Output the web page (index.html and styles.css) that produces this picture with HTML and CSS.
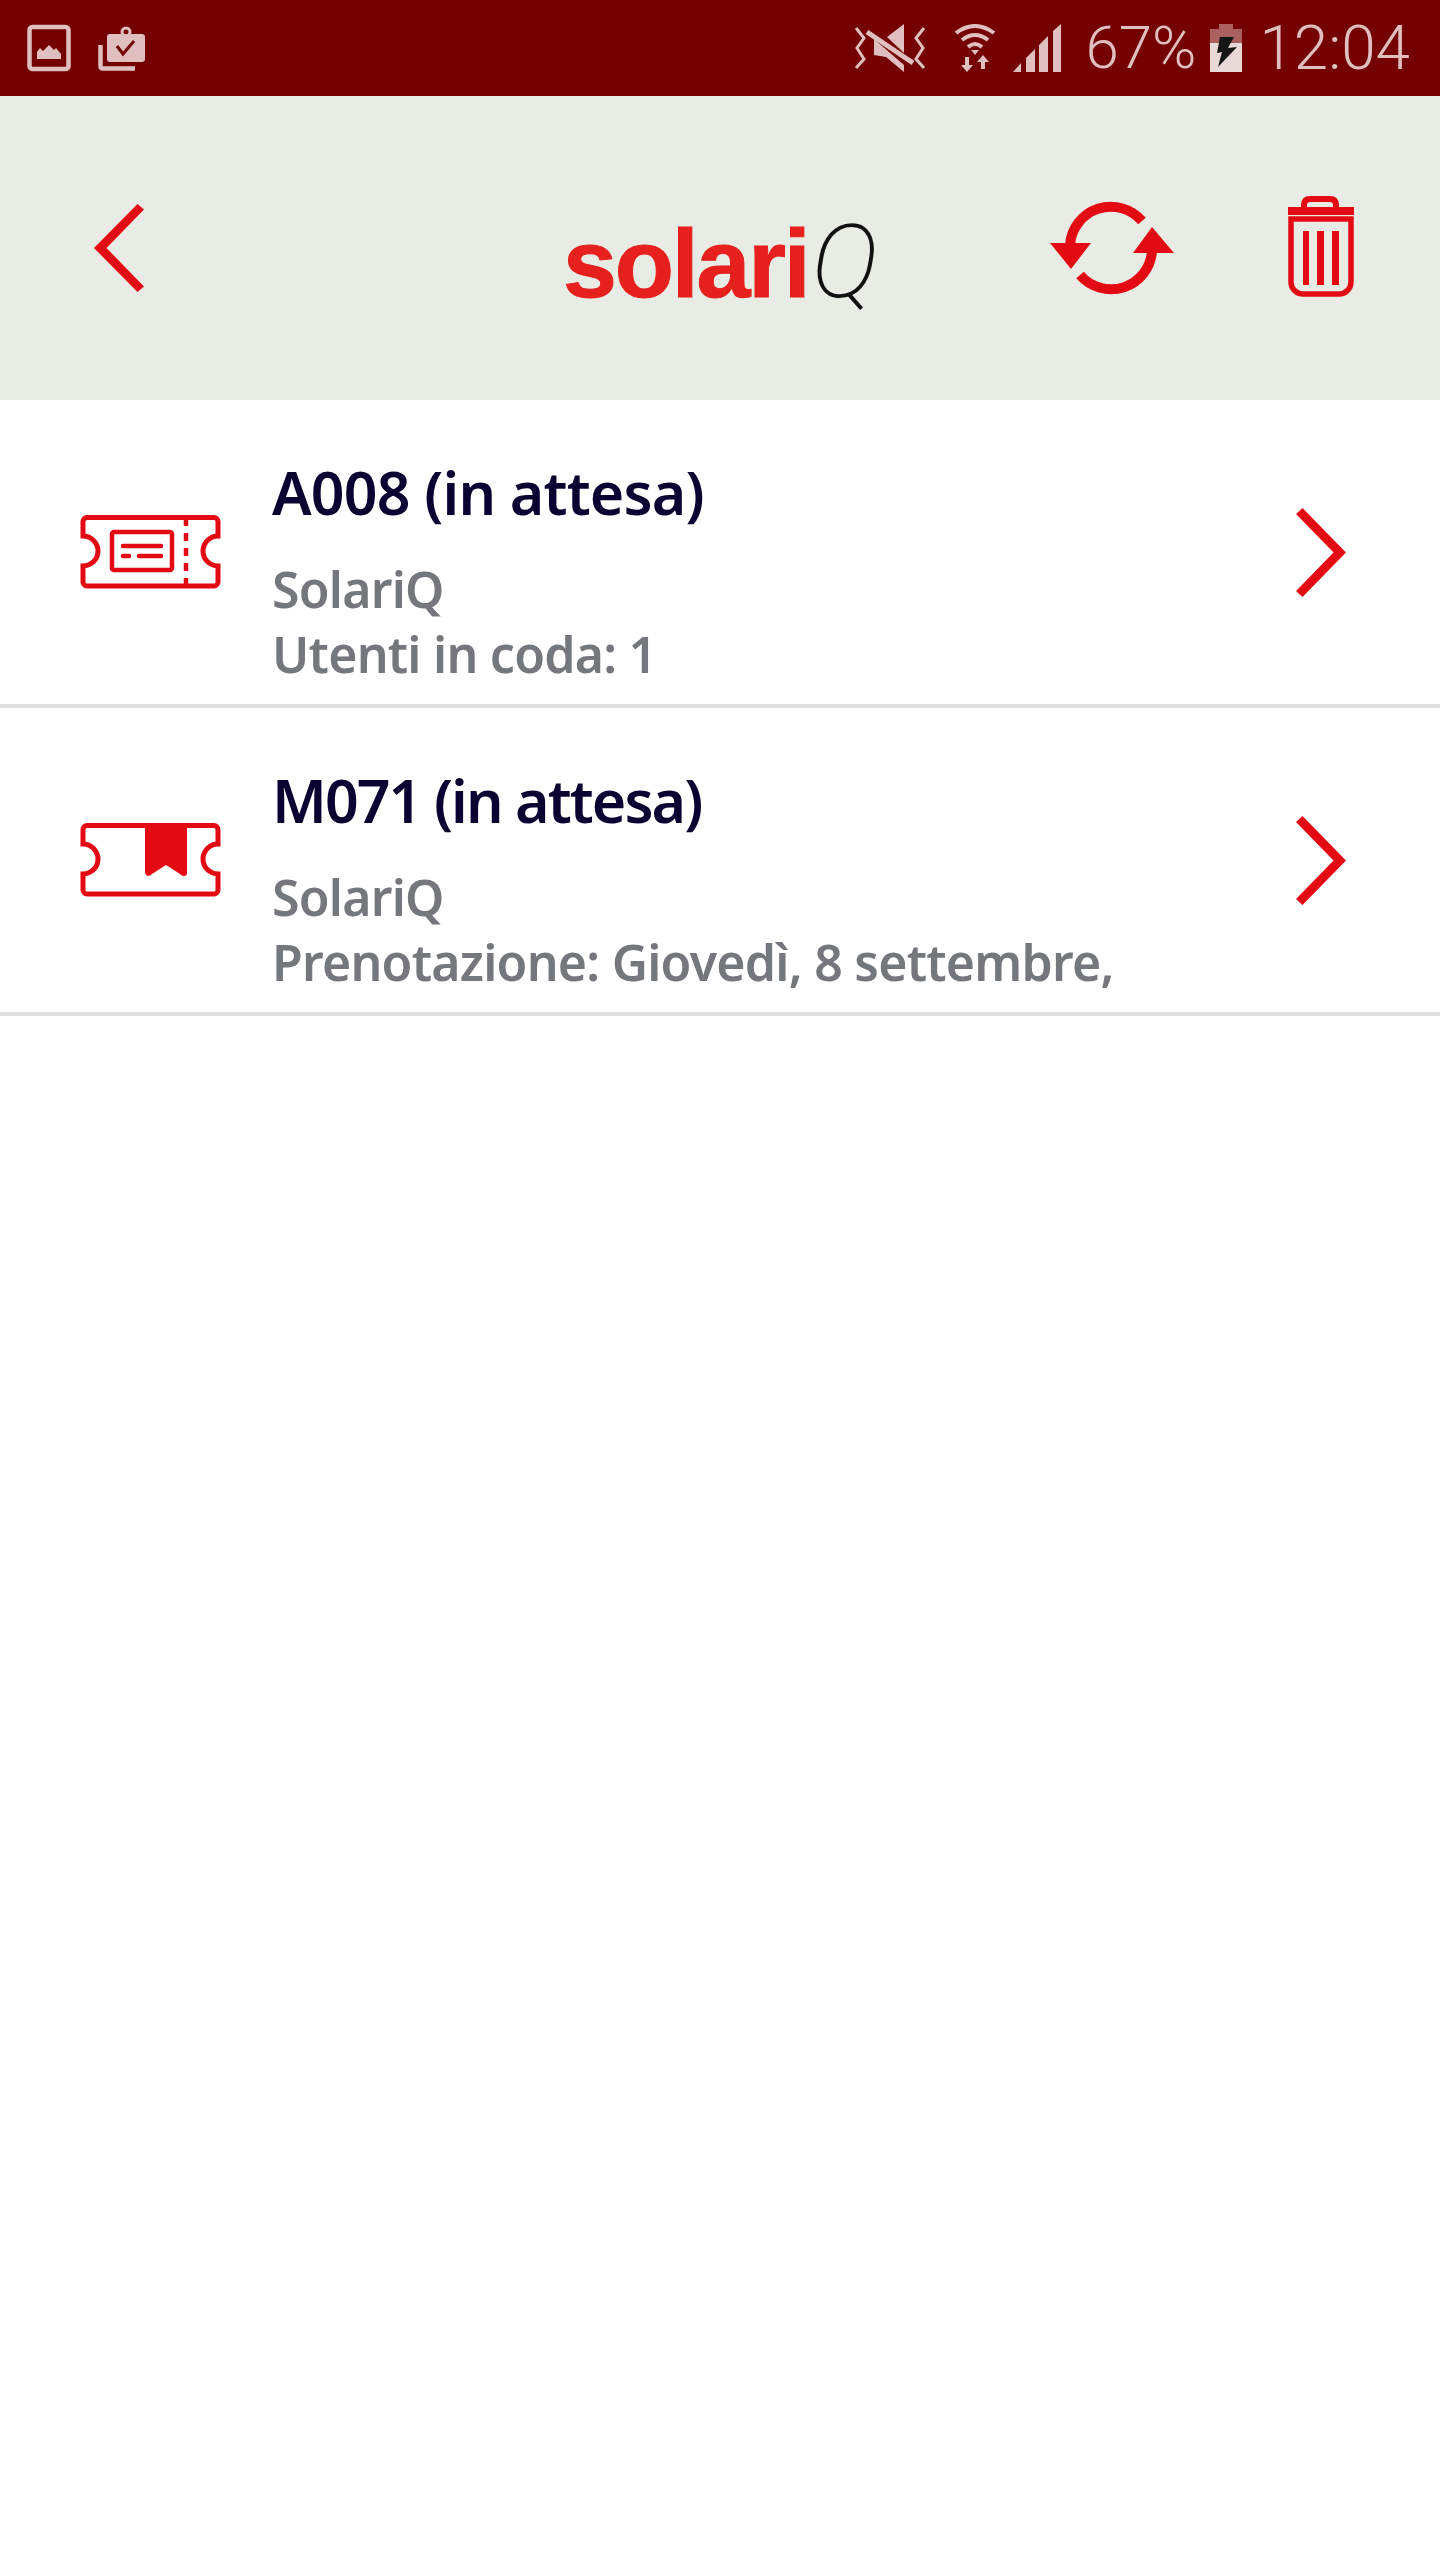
FILE: index.html
```html
<!DOCTYPE html>
<html lang="it">
<head>
    <meta charset="UTF-8">
    <meta name="viewport" content="width=device-width, initial-scale=1.0">
    <link rel="stylesheet" href="styles.css">
    <title>SolariQ</title>
</head>
<body>
    <div class="status-bar">
        <div class="status-left">
            <svg class="status-icon" width="44" height="48" viewBox="0 0 44 48">
                <rect x="2.5" y="3" width="39" height="42" rx="3" fill="none" stroke="#dfbfbf" stroke-width="4.5"/>
                <path d="M10 35V28l3-4 3 3 6-6 5 5 2-2 5 6v5z" fill="#dfbfbf"/>
            </svg>
            <svg class="status-icon" width="47" height="48" viewBox="0 0 47 48">
                <path d="M2.5 21V42q0 2.5 2.5 2.5H37" fill="none" stroke="#dfbfbf" stroke-width="4.5"/>
                <rect x="9" y="10" width="38" height="28" rx="3" fill="#dfbfbf"/>
                <circle cx="28" cy="8" r="4" fill="none" stroke="#dfbfbf" stroke-width="3"/>
                <path d="M19 22l6 8 11-13" fill="none" stroke="#750000" stroke-width="3"/>
            </svg>
        </div>
        <div class="status-right">
            <svg class="status-icon" width="72" height="48" viewBox="0 0 72 48">
                <path d="M2 4l8 10-7 10 7 11-8 9M70 4l-8 10 7 10-7 11 8 9" fill="none" stroke="#dfbfbf" stroke-width="3"/>
                <path d="M50 0L33 13 50 29zM20 15v16l12 2 18 15v-7z" fill="#dfbfbf"/>
                <path d="M13 8l46 31" stroke="#dfbfbf" stroke-width="5"/>
            </svg>
            <svg class="status-icon wifi" width="42" height="48" viewBox="0 0 42 48">
                <path d="M2 9Q21-5 40 9M8 16Q21 6 34 16M14 23Q21 17 28 23" fill="none" stroke="#dfbfbf" stroke-width="4"/>
                <path d="M17 26h8l-4 5zM11 33h4v8h4l-6 7-6-7h4zM29 31l6 7h-4v7h-4v-7h-4z" fill="#dfbfbf"/>
            </svg>
            <svg class="status-icon signal" width="50" height="48" viewBox="0 0 50 48">
                <path d="M1 48l8-9v9zM14 48V34l9-9v23zM27 48V21l9-9v36zM41 48V7l8-7v48z" fill="#dfbfbf"/>
            </svg>
            <span class="status-text percent">67%</span>
            <svg class="status-icon battery" width="32" height="48" viewBox="0 0 32 48">
                <path d="M9 0h14v5h9v14H0V5h9z" fill="#ab6060"/>
                <rect y="19" width="32" height="29" fill="#e8d8d8"/>
                <path d="M24 13H10L7 29l5-1-4 15 19-20-9 1z" fill="#151515"/>
            </svg>
            <span class="status-text clock">12:04</span>
        </div>
    </div>

    <div class="top-bar">
        <svg class="back" width="50" height="88" viewBox="0 0 50 88">
            <path d="M43.500 0l6.500 5.500L12.500 44 50 82.500 43.500 88 0 44z" fill="#e40a14"/>
        </svg>
        <div class="logo"><span class="logo-name">solari</span><span class="logo-q">Q</span></div>
        <svg class="refresh" width="124" height="94" viewBox="0 0 124 94">
            <path d="M20 44A41 41 0 0 1 92 20M102 50A41 41 0 0 1 30 74" fill="none" stroke="#e40a14" stroke-width="10"/>
            <path d="M0 42h41L21 68zM83 52h41L102 26z" fill="#e40a14"/>
        </svg>
        <svg class="trash" width="66" height="101" viewBox="0 0 66 101">
            <path d="M16 13V9q0-6 6-6h20q6 0 6 6v4" fill="none" stroke="#e40a14" stroke-width="6"/>
            <rect y="11" width="66" height="8" fill="#e40a14"/>
            <path d="M3 23V86a12 12 0 0 0 12 12h36a12 12 0 0 0 12-12V23z" fill="none" stroke="#e40a14" stroke-width="5.5"/>
            <path d="M15 35h6v54h-6zM29 35h7v54h-7zM44 35h7v54h-7z" fill="#e40a14"/>
        </svg>
    </div>

    <div class="row">
        <div class="row-icon">
            <svg width="141" height="74" viewBox="0 0 141 74">
                <path d="M7 2.500H134a4 4 0 0 1 4 4V21a15 15 0 0 0 0 30V67a4 4 0 0 1-4 4H7a4 4 0 0 1-4-4V51a15 15 0 0 0 0-30V6.500a4 4 0 0 1 4-4z" fill="none" stroke="#e40a14" stroke-width="5"/>
                <rect x="32" y="17" width="60" height="38" rx="2" fill="none" stroke="#e40a14" stroke-width="4.5"/>
                <path d="M43 31H81M43 41H49M59 41H81" fill="none" stroke="#e40a14" stroke-width="4.5" stroke-linecap="round"/>
                <path d="M106 3V71" fill="none" stroke="#e40a14" stroke-width="4.5" stroke-dasharray="8 7"/>
            </svg>
        </div>
        <div class="row-text">
            <div class="row-title">A008 (in attesa)</div>
            <div class="row-sub first">SolariQ</div>
            <div class="row-sub">Utenti in coda: 1</div>
        </div>
        <svg class="row-arrow" width="50" height="89" viewBox="0 0 50 89">
            <path d="M6.500 0L50 44.500 6.500 89 0 83 37.500 44.500 0 6z" fill="#e40a14"/>
        </svg>
    </div>

    <div class="row">
        <div class="row-icon">
            <svg width="141" height="74" viewBox="0 0 141 74">
                <path d="M7 2.500H134a4 4 0 0 1 4 4V21a15 15 0 0 0 0 30V67a4 4 0 0 1-4 4H7a4 4 0 0 1-4-4V51a15 15 0 0 0 0-30V6.500a4 4 0 0 1 4-4z" fill="none" stroke="#e40a14" stroke-width="5"/>
                <path d="M65 3h42V50q0 3-3 3t-4-2l-14-9-14 9q-2 2-4 2t-3-3z" fill="#e40a14"/>
            </svg>
        </div>
        <div class="row-text">
            <div class="row-title tight">M071 (in attesa)</div>
            <div class="row-sub first">SolariQ</div>
            <div class="row-sub">Prenotazione: Giovedì, 8 settembre,</div>
        </div>
        <svg class="row-arrow" width="50" height="89" viewBox="0 0 50 89">
            <path d="M6.500 0L50 44.500 6.500 89 0 83 37.500 44.500 0 6z" fill="#e40a14"/>
        </svg>
    </div>
</body>
</html>
```

FILE: styles.css
```css
body {
    margin: 0;
    background-color: #fff;
    font-family: "Noto Sans", sans-serif;
}

.status-bar {
    display: flex;
    justify-content: space-between;
    align-items: center;
    height: 96px;
    padding: 0 30px 0 27px;
    background-color: #750000;
    color: #dfbfbf;
}
.status-left {
    display: flex;
    gap: 27px;
}
.status-right {
    display: flex;
    align-items: center;
    gap: 28px;
}
.status-icon {
    display: block;
}
.signal {
    margin-left: -12px;
}
.percent {
    margin-left: -5px;
}
.battery {
    margin-left: -14px;
    margin-right: -11px;
}
.status-text {
    font-family: Roboto, sans-serif;
    font-size: 60px;
    font-weight: 300;
    line-height: 96px;
}
.clock {
    font-size: 62px;
}

.top-bar {
    display: flex;
    height: 304px;
    background-color: #e9ece5;
}
.back {
    margin: 108px 0 0 94px;
}
.logo {
    display: flex;
    align-items: baseline;
    width: 312px;
    height: 110px;
    margin: 111px 0 0 419px;
    line-height: 110px;
}
.logo-name {
    font-family: "Liberation Sans", sans-serif;
    font-size: 97px;
    font-weight: bold;
    letter-spacing: -2.2px;
    color: #e6201c;
    -webkit-text-stroke: 1px #e6201c;
}
.logo-q {
    margin-left: 3px;
    font-family: Roboto, sans-serif;
    font-size: 102px;
    font-weight: 200;
    font-style: italic;
    color: #111;
}
.refresh {
    margin: 105px 0 0 175px;
}
.trash {
    margin: 100px 0 0 114px;
}

.row {
    display: flex;
    align-items: center;
    height: 304px;
    border-bottom: 4px solid #e0e0e0;
}
.row-icon {
    width: 192px;
    padding-left: 80px;
}
.row-icon svg {
    display: block;
}
.row-text {
    flex: 1;
    align-self: flex-start;
    padding-top: 56px;
}
.row-title {
    font-size: 59px;
    font-weight: 600;
    line-height: 72px;
    letter-spacing: -0.8px;
    color: #0a0230;
}
.tight {
    letter-spacing: -1.9px;
}
.row-sub {
    font-size: 50px;
    font-weight: 600;
    line-height: 65px;
    letter-spacing: -0.75px;
    color: #74777b;
}
.first {
    margin-top: 29px;
}
.row-arrow {
    margin-right: 94px;
}
```
